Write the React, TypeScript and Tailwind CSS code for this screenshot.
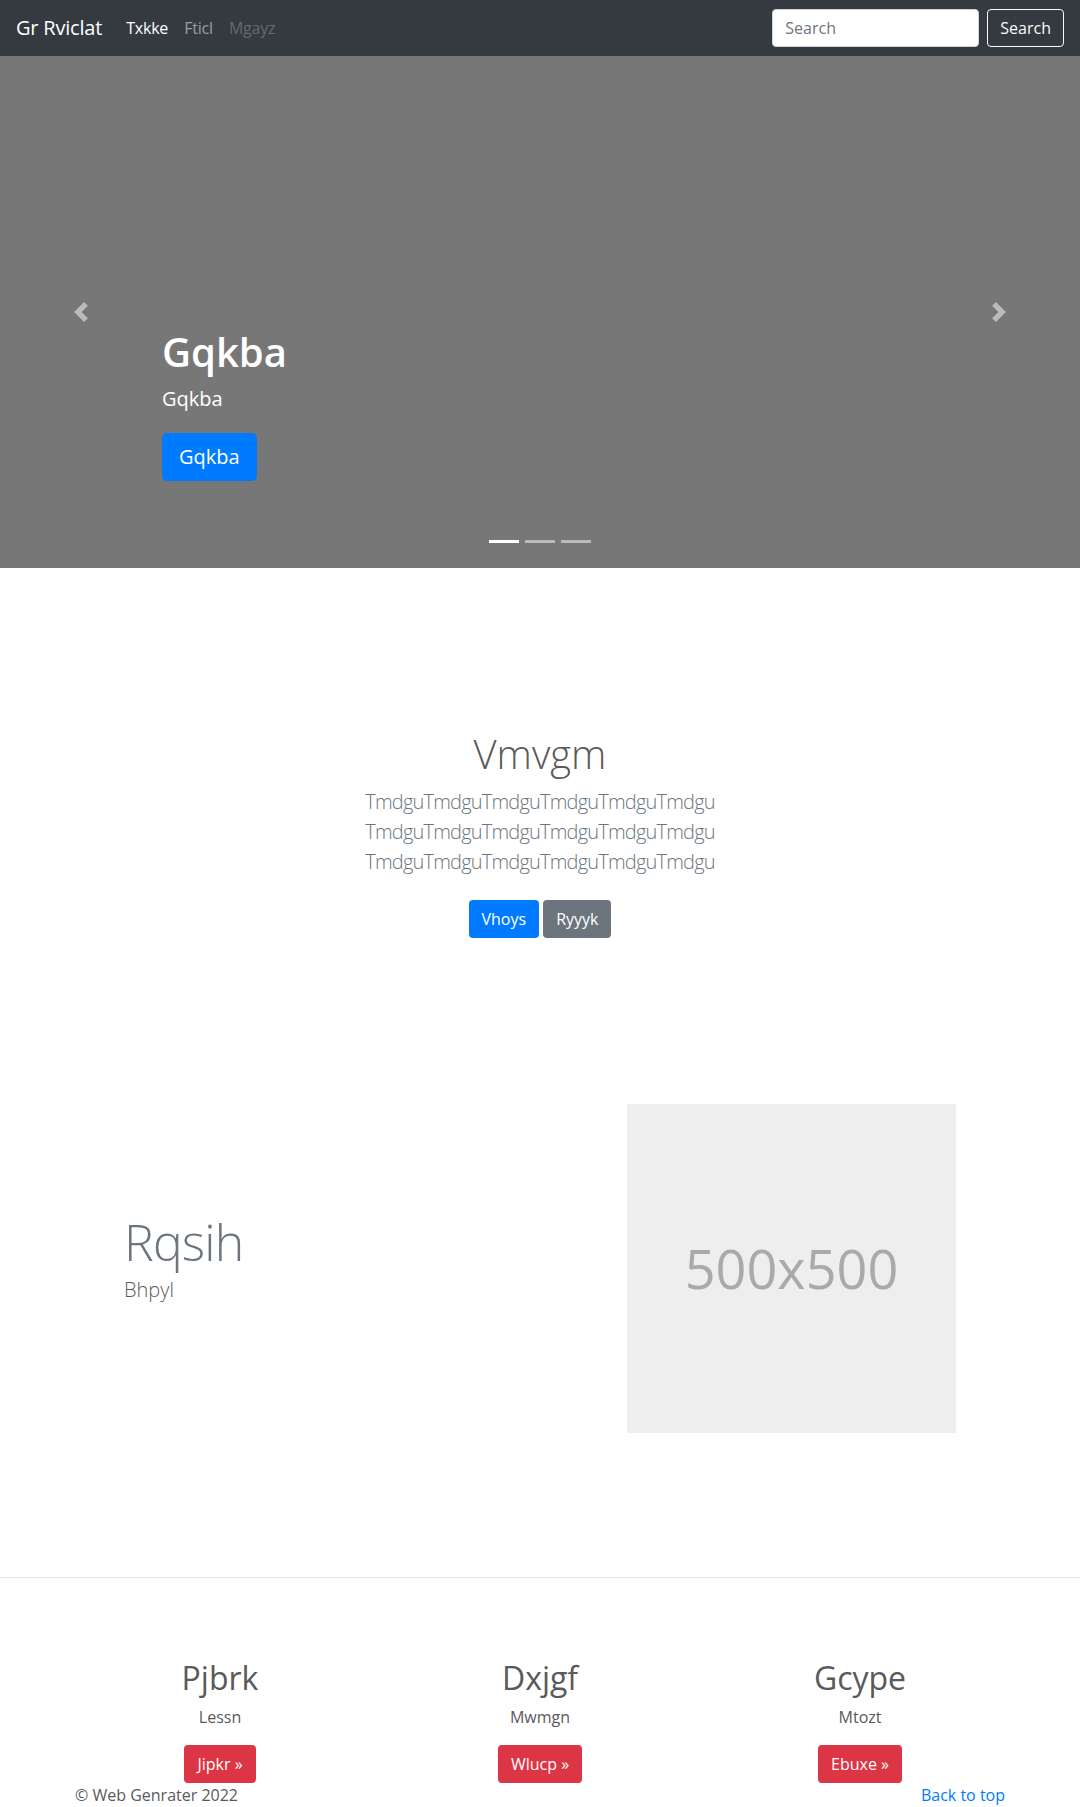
import React from "react";

function Chevron({ flip }: { flip?: boolean }) {
  return (
    <svg
      width="20"
      height="20"
      viewBox="0 0 8 8"
      className={flip ? "rotate-180" : ""}
      fill="#fff"
    >
      <path d="M5.25 0l-4 4 4 4 1.5-1.5L4.25 4l2.5-2.5L5.25 0z" />
    </svg>
  );
}

const columns = [
  { title: "Pjbrk", text: "Lessn", btn: "Jipkr" },
  { title: "Dxjgf", text: "Mwmgn", btn: "Wlucp" },
  { title: "Gcype", text: "Mtozt", btn: "Ebuxe" },
];

function App() {
  return (
    <div className="min-h-screen overflow-hidden bg-white font-['Open_Sans',sans-serif] text-[#5a5a5a]">
      {/* navbar */}
      <nav className="flex h-14 items-center bg-[#343a40] px-4">
        <a className="mr-4 text-xl leading-[30px] tracking-[-0.2px] text-white">Gr Rviclat</a>
        <ul className="flex leading-6 tracking-[-0.2px]">
          <li className="px-2 text-white">Txkke</li>
          <li className="px-2 text-white/50">Fticl</li>
          <li className="px-2 text-white/25">Mgayz</li>
        </ul>
        <form className="ml-auto flex">
          <input
            placeholder="Search"
            className="h-[38px] w-[207px] rounded border border-[#ced4da] bg-white px-3 text-base text-[#495057] outline-none placeholder:text-[#6c757d]"
          />
          <button
            type="button"
            className="ml-2 h-[38px] rounded border border-[#f8f9fa] px-3 text-base text-[#f8f9fa]"
          >
            Search
          </button>
        </form>
      </nav>

      {/* carousel */}
      <div className="relative flex h-[512px] flex-col justify-end bg-[#777] pb-[87px] pl-[162px]">
        <h1 className="mb-2 text-[40px] font-semibold leading-[1.2] text-white">Gqkba</h1>
        <p className="mb-[19px] text-xl leading-[30px] text-white">Gqkba</p>
        <div>
          <a className="inline-block rounded-[5px] border border-transparent bg-[#007bff] px-4 py-2 text-xl leading-[30px] text-white">
            Gqkba
          </a>
        </div>
        <div className="absolute left-[71px] top-[246px] opacity-50">
          <Chevron />
        </div>
        <div className="absolute right-[71px] top-[246px] opacity-50">
          <Chevron flip />
        </div>
        <div className="absolute bottom-[25px] left-0 right-0 flex justify-center gap-[6px]">
          <span className="h-[3px] w-[30px] bg-white" />
          <span className="h-[3px] w-[30px] bg-white/50" />
          <span className="h-[3px] w-[30px] bg-white/50" />
        </div>
      </div>

      {/* jumbotron */}
      <section className="pt-[162px] text-center">
        <h1 className="mb-[9px] text-[40px] font-light leading-[1.2]">Vmvgm</h1>
        <p className="mb-[23px] text-xl font-light leading-[30px] tracking-[-0.8px] text-[#6c757d]">
          TmdguTmdguTmdguTmdguTmdguTmdgu
          <br />
          TmdguTmdguTmdguTmdguTmdguTmdgu
          <br />
          TmdguTmdguTmdguTmdguTmdguTmdgu
        </p>
        <div className="flex justify-center gap-1">
          <a className="rounded border border-transparent bg-[#007bff] px-3 py-1.5 leading-6 text-white">Vhoys</a>
          <a className="rounded border border-transparent bg-[#6c757d] px-3 py-1.5 leading-6 text-white">Ryyyk</a>
        </div>
      </section>

      {/* featurette */}
      <div className="mt-[166px] flex items-center px-[124px]">
        <div className="flex-1">
          <h2 className="mb-2 text-[50px] font-light leading-none tracking-[-0.05rem] text-[#6c757d]">Rqsih</h2>
          <p className="mb-4 text-xl font-light leading-[30px]">Bhpyl</p>
        </div>
        <div className="flex h-[329px] w-[329px] items-center justify-center bg-[#eee] text-[54px] text-[#aaa]">
          500x500
        </div>
      </div>

      <hr className="mt-[144px] border-0 border-t border-[#e5e5e5]" />

      {/* marketing */}
      <div className="mx-auto mt-[81px] grid w-[960px] grid-cols-3 text-center">
        {columns.map((c) => (
          <div key={c.title} className="px-[15px]">
            <h2 className="mb-2 text-[32px] font-medium leading-[1.2]">{c.title}</h2>
            <p className="mb-4 leading-6">{c.text}</p>
            <a className="inline-block rounded border border-transparent bg-[#dc3545] px-3 py-1.5 leading-6 text-white">
              {c.btn} »
            </a>
          </div>
        ))}
      </div>

      <footer className="mx-auto flex w-[960px] justify-between px-[15px] leading-6">
        <p>© Web Genrater 2022</p>
        <p>
          <a className="text-[#007bff]">Back to top</a>
        </p>
      </footer>
    </div>
  );
}

export default App;
